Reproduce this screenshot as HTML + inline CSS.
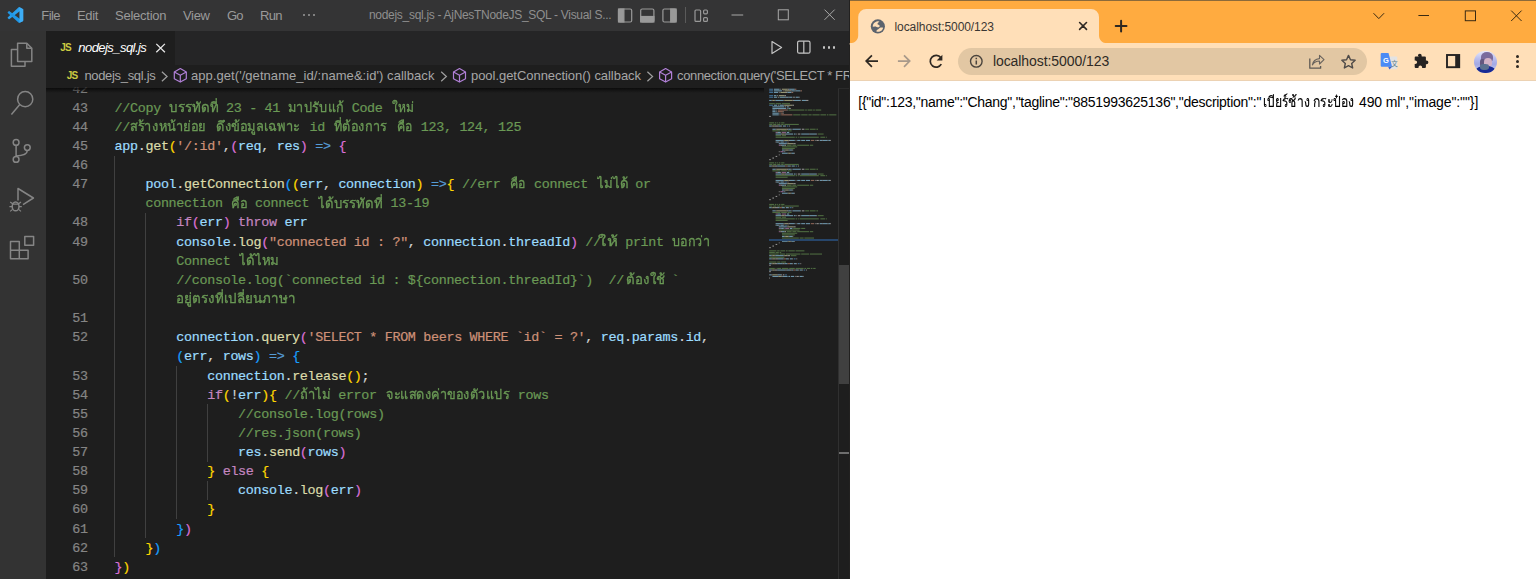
<!DOCTYPE html>
<html lang="th">
<head>
<meta charset="utf-8">
<title>nodejs_sql.js - Visual Studio Code / localhost:5000/123</title>
<style>
html,body{margin:0;padding:0;}
body{width:1536px;height:579px;overflow:hidden;position:relative;background:#1e1e1e;font-family:"Liberation Sans",sans-serif;}
.b{position:absolute;}
.t{position:absolute;white-space:pre;line-height:20px;height:20px;transform-origin:0 50%;}
svg{position:absolute;overflow:visible;}
.th{font-family:"Liberation Sans",sans-serif;-webkit-text-stroke:.3px currentColor;}
.th2{-webkit-text-stroke:.2px currentColor;}
.m{font-family:"Liberation Mono",monospace;-webkit-text-stroke:.2px currentColor;}

</style>
</head>
<body>
<div class="b" style="left:0.00px;top:0.00px;width:848.80px;height:31.00px;background:#343435;"></div>
<div class="b" style="left:0.00px;top:31.00px;width:46.00px;height:548.00px;background:#333333;"></div>
<div class="b" style="left:46.00px;top:30.80px;width:802.80px;height:34.20px;background:#252526;"></div>
<div class="b" style="left:46.00px;top:30.80px;width:128.50px;height:34.20px;background:#1e1e1e;"></div>
<div class="b" style="left:46.00px;top:65.00px;width:802.80px;height:514.00px;background:#1e1e1e;"></div>
<div class="b" style="left:303.0px;top:13.8px;width:1.8px;height:1.8px;border-radius:1px;background:#9a9a9a"></div>
<div class="b" style="left:308.2px;top:13.8px;width:1.8px;height:1.8px;border-radius:1px;background:#9a9a9a"></div>
<div class="b" style="left:313.4px;top:13.8px;width:1.8px;height:1.8px;border-radius:1px;background:#9a9a9a"></div>
<div class="b" style="left:114.10px;top:155.51px;width:1.00px;height:401.84px;background:#404040;"></div>
<div class="b" style="left:144.98px;top:212.91px;width:1.00px;height:325.30px;background:#404040;"></div>
<div class="b" style="left:175.86px;top:365.99px;width:1.00px;height:153.08px;background:#404040;"></div>
<div class="b" style="left:206.74px;top:404.26px;width:1.00px;height:57.40px;background:#404040;"></div>
<div class="b" style="left:206.74px;top:480.80px;width:1.00px;height:19.13px;background:#404040;"></div>
<div class="b" style="left:848.80px;top:0.00px;width:0.80px;height:579.00px;background:#222120;"></div>
<div class="b" style="left:849.60px;top:0.00px;width:686.40px;height:43.20px;background:#ffab40;"></div>
<div class="b" style="left:849.60px;top:0.00px;width:686.40px;height:0.90px;background:#8c6a3a;"></div>
<div class="b" style="left:849.60px;top:43.20px;width:686.40px;height:37.40px;background:#ffdfb8;"></div>
<div class="b" style="left:849.60px;top:79.80px;width:686.40px;height:0.80px;background:#ecd2b3;"></div>
<div class="b" style="left:849.60px;top:80.60px;width:686.40px;height:498.40px;background:#ffffff;"></div>
<svg style="left:0;top:0" width="1536" height="90"><path fill="#ffdfb8" d="M849.600 43.300 C855 43.300 858.200 40 858.200 35.300 V17 a8 8 0 0 1 8 -8 H1091 a8 8 0 0 1 8 8 V35.300 C1099 40 1102.200 43.300 1107.200 43.300 V44.500 H849.600 Z"/></svg>
<div class="b" style="left:958.2px;top:47.9px;width:408.8px;height:27.5px;border-radius:14px;background:#e2c7a3"></div>
<svg style="left:0;top:0" width="1536" height="579" fill="none"><g transform="translate(7.65,7.2) scale(0.157)"><path fill="#2a9fec" d="M96.5 10.8 75.9 .9a6.2 6.2 0 0 0-7.1 1.2L1.3 63.6a4.2 4.2 0 0 0 0 6.2l5.5 5a4.2 4.2 0 0 0 5.3.2L93.3 13.4c2.7-2.1 6.7-.1 6.7 3.3v-.2c0-2.400-1.400-4.600-3.500-5.700z" transform="scale(1,1)"/><path fill="#1f96e6" d="M96.5 89.200 75.900 99.100a6.200 6.200 0 0 1-7.100-1.200L1.300 36.400a4.200 4.200 0 0 1 0-6.200l5.500-5a4.200 4.200 0 0 1 5.300-.2L93.300 86.600c2.700 2.100 6.700.1 6.700-3.300v.2c0 2.400-1.400 4.600-3.500 5.700z"/><path fill="#3dadf5" d="M75.900 99.100a6.200 6.200 0 0 1-7.100-1.200c2.300 2.300 6.200.7 6.200-2.600V4.700c0-3.300-3.900-4.900-6.200-2.600a6.200 6.200 0 0 1 7.100-1.200l20.600 9.900c2.100 1 3.500 3.200 3.500 5.600v67.200c0 2.400-1.400 4.600-3.500 5.600z"/></g></svg>
<svg style="left:0;top:0" width="1536" height="579" fill="none"><g stroke="#858585" stroke-width="1.5" stroke-linejoin="round"><path d="M17.600 43.200h9.200l5 5v13.200h-14.200z"/><path d="M26.800 43.200v5h5"/><path d="M17.600 49.600h-6.200v16.600h13.600v-4.800"/></g></svg>
<svg style="left:0;top:0" width="1536" height="579" fill="none"><g stroke="#858585" stroke-width="1.5"><circle cx="25.200" cy="99.200" r="7.600"/><path d="M19.800 104.600 11.400 114.600"/></g></svg>
<svg style="left:0;top:0" width="1536" height="579" fill="none"><g stroke="#858585" stroke-width="1.5"><circle cx="16.100" cy="142.400" r="2.900"/><circle cx="16.100" cy="159.400" r="2.900"/><circle cx="27.300" cy="147.600" r="2.900"/><path d="M16.100 145.300v11.200M27.300 150.500c0 4.500-5.500 5.200-11.200 5.400"/></g></svg>
<svg style="left:0;top:0" width="1536" height="579" fill="none"><g stroke="#858585" stroke-width="1.500" stroke-linejoin="round"><path d="M18 200.500v-12l15.400 9.500-10.400 6.600"/><ellipse cx="15.600" cy="206.400" rx="3.400" ry="4.400"/><path d="M12.200 204.200h6.800M9.400 206.600h2.800M19 206.600h2.800M10.200 202l2.400 1.800M21 202l-2.400 1.800M10.200 211.400l2.400-2M21 211.400l-2.400-2" stroke-width="1.200"/></g></svg>
<svg style="left:0;top:0" width="1536" height="579" fill="none"><g stroke="#858585" stroke-width="1.500" stroke-linejoin="round"><path d="M10.500 241.600h8.800v17.200h-8.800zM10.500 250.200h17.600v8.600h-8.800M19.300 250.200h8.800v8.600"/><rect x="24.800" y="236.400" width="8.800" height="8.800"/></g></svg>
<svg style="left:0;top:0" width="1536" height="579" fill="none"><g stroke="#999999" stroke-width="1.200"><rect x="618.500" y="9" width="13.200" height="13" rx="1.500"/><rect x="618.500" y="9" width="5.400" height="13" fill="#999999"/><rect x="640.700" y="9" width="13.200" height="13" rx="1.500"/><rect x="640.700" y="16.500" width="13.200" height="5.500" fill="#999999"/><rect x="662.900" y="9" width="13.200" height="13" rx="1.500"/><rect x="670.700" y="9" width="5.400" height="13" fill="#999999"/><rect x="695" y="10" width="5.600" height="11.400" rx="1"/><rect x="703.600" y="10" width="3.800" height="3.800" rx="1"/><rect x="703.600" y="17.600" width="3.800" height="3.800" rx="1"/></g></svg>
<div class="b" style="left:684.70px;top:7.30px;width:1.00px;height:15.50px;background:#5a5a5a;"></div>
<svg style="left:0;top:0" width="1536" height="579" fill="none"><g stroke="#a8a8a8" stroke-width="1"><path d="M731.500 15h11.700"/><rect x="778.300" y="9.800" width="10" height="10"/><path d="M824.500 9.600l10.200 10.200M834.700 9.600l-10.200 10.200"/></g></svg>
<svg style="left:0;top:0" width="1536" height="579" fill="none"><g stroke="#e8e8e8" stroke-width="1.300"><path d="M156.300 43.900l8.600 8.400M164.900 43.900l-8.600 8.400"/></g></svg>
<svg style="left:0;top:0" width="1536" height="579" fill="none"><g stroke="#c5c5c5" stroke-width="1.200" stroke-linejoin="round"><path d="M772 41.600v12l9.600-6z"/><rect x="797.600" y="41.200" width="12.400" height="12" rx="1.500"/><path d="M803.800 41.200v12"/></g></svg>
<div class="b" style="left:823.2px;top:46.400px;width:2.200px;height:2.200px;border-radius:50%;background:#c5c5c5"></div>
<div class="b" style="left:828.1px;top:46.400px;width:2.200px;height:2.200px;border-radius:50%;background:#c5c5c5"></div>
<div class="b" style="left:833.0px;top:46.400px;width:2.200px;height:2.200px;border-radius:50%;background:#c5c5c5"></div>
<svg style="left:0;top:0" width="1536" height="579" fill="none"><path stroke="#a0a0a0" stroke-width="1.200" d="M161.9 71.700l5.200 4.800-5.200 4.800"/></svg>
<svg style="left:0;top:0" width="1536" height="579" fill="none"><g transform="translate(173.7,68.000)" stroke="#b180d7" stroke-width="1.200" stroke-linejoin="round"><path d="M6.600 .6l6 3.400v6.700L6.600 14.100 .6 10.700v-6.700z"/><path d="M.6 4L6.600 7.200l6-3.200M6.600 7.200v6.900"/></g></svg>
<svg style="left:0;top:0" width="1536" height="579" fill="none"><path stroke="#a0a0a0" stroke-width="1.200" d="M441.2 71.700l5.200 4.800-5.200 4.800"/></svg>
<svg style="left:0;top:0" width="1536" height="579" fill="none"><g transform="translate(452.9,68.000)" stroke="#b180d7" stroke-width="1.200" stroke-linejoin="round"><path d="M6.600 .6l6 3.400v6.700L6.600 14.100 .6 10.700v-6.700z"/><path d="M.6 4L6.600 7.200l6-3.200M6.600 7.200v6.900"/></g></svg>
<svg style="left:0;top:0" width="1536" height="579" fill="none"><path stroke="#a0a0a0" stroke-width="1.200" d="M647.4 71.700l5.200 4.800-5.200 4.800"/></svg>
<svg style="left:0;top:0" width="1536" height="579" fill="none"><g transform="translate(659.0,68.000)" stroke="#b180d7" stroke-width="1.200" stroke-linejoin="round"><path d="M6.600 .6l6 3.400v6.700L6.600 14.100 .6 10.700v-6.700z"/><path d="M.6 4L6.600 7.200l6-3.200M6.600 7.200v6.900"/></g></svg>
<svg style="left:0;top:0" width="1536" height="579" fill="none"><g stroke="#3a2a12" stroke-width="1"><path d="M1373.500 13.200l5.300 5.400 5.300-5.400"/><path d="M1418.400 15.500h10.600"/><rect x="1465.300" y="10.900" width="10.200" height="9.800"/><path d="M1511.200 10.600l10.400 10.400M1521.600 10.600l-10.400 10.400"/></g></svg>
<svg style="left:0;top:0" width="1536" height="579" fill="none"><g stroke="#2e2822" stroke-linecap="round"><path stroke-width="1.600" d="M1079.600 22.500l6.900 6.900M1086.500 22.500l-6.900 6.900"/><path stroke-width="2" d="M1115.700 26.100h10.800M1121.100 20.700v10.800"/></g></svg>
<svg style="left:0;top:0" width="1536" height="579" fill="none"><g><circle cx="877.850" cy="26.400" r="7.100" fill="#5c636d"/><path fill="#ffdfb8" transform="translate(877.850 26.400) scale(.94) translate(-877.600 -26.300)" d="M872.200 26.600C872.100 23.600 874.400 21.300 877.300 20.800L879.300 21.200C878.300 22.200 876.900 23 877.300 24C877.600 24.700 878.900 24.500 879.400 25.300C879.900 26.200 879.100 27.300 877.800 27.300C876.500 27.300 875.900 26.500 874.600 26.500Z"/><path fill="#ffdfb8" d="M876.600 31.700C876.200 30.700 876.900 30 877.900 29.600C879 29.100 879.100 28.200 880 27.800C881 27.400 882.200 27.500 883.100 27.800C883 29.300 881.900 30.700 880.400 31.300C879.200 31.800 877.800 31.900 876.600 31.700Z"/></g></svg>
<svg style="left:0;top:0" width="1536" height="579" fill="none"><g stroke-width="1.700" fill="none"><path stroke="#2e2822" d="M878 61.100h-11.600M871.900 55.400l-5.700 5.700 5.700 5.700"/><path stroke="#a8998a" d="M897.900 61.100h11.600M904 55.400l5.700 5.700-5.700 5.700"/><path stroke="#2e2822" d="M940.800 57.600A5.900 5.900 0 1 0 941.300 64.200"/><path fill="#2e2822" stroke="none" d="M942.400 54.700v5.700h-5.700z"/></g></svg>
<svg style="left:0;top:0" width="1536" height="579" fill="none"><g><circle cx="976.300" cy="61.300" r="5.800" stroke="#4a443d" stroke-width="1.400"/><path stroke="#4a443d" stroke-width="1.500" d="M976.300 60.400v4M976.300 57.700v1.600"/></g></svg>
<svg style="left:0;top:0" width="1536" height="579" fill="none"><g stroke="#5e5954" stroke-width="1.300" stroke-linejoin="round"><path d="M1309.800 58.400V68.200H1320.600V66"/><path stroke="#69635d" stroke-width="1.100" d="M1312.400 64.900c.6-3.600 3-5.900 7.100-6.300v-3.200l4.500 4.300-4.500 4.300v-3c-3.200 0-5.400 1.100-7.100 3.900z"/></g></svg>
<svg style="left:0;top:0" width="1536" height="579" fill="none"><path stroke="#4f4b48" stroke-width="1.400" stroke-linejoin="round" d="M1348.500 55.400l1.960 4.300 4.700.5-3.500 3.200 1 4.600-4.160-2.400-4.160 2.400 1-4.600-3.500-3.200 4.700-.5z"/></svg>
<svg style="left:0;top:0" width="1536" height="579" fill="none"><g><rect x="1389.600" y="56.500" width="7.600" height="12.800" rx=".8" fill="#e3e3e3"/><path d="M1380.700 54.100a1 1 0 0 1 1-1h6.800l3.600 13.600h-10.400a1 1 0 0 1-1-1z" fill="#4b8bf5"/><path d="M1388.200 66.700h3.900l-2.700 2.900z" fill="#3a5fcf"/></g></svg>
<svg style="left:0;top:0" width="1536" height="579" fill="none"><path transform="translate(-1.3,-.7)" fill="#262322" d="M1419.200 56.400a1.900 1.900 0 0 1 3.800 0v.9h3.200a1 1 0 0 1 1 1v2.800h.6a1.900 1.900 0 0 1 0 3.800h-.6v2.800a1 1 0 0 1-1 1h-2.800v-.7a1.800 1.800 0 0 0-3.600 0v.7h-2.800a1 1 0 0 1-1-1v-2.900h.6a1.800 1.800 0 0 0 0-3.600h-.6v-2.900a1 1 0 0 1 1-1h3.200z"/></svg>
<svg style="left:0;top:0" width="1536" height="579" fill="none"><g><rect x="1447" y="55" width="12.200" height="12.200" stroke="#262322" stroke-width="1.900"/><rect x="1455.200" y="55" width="4" height="12.200" fill="#262322"/></g></svg>
<div class="b" style="left:1474.100px;top:50.700px;width:22.500px;height:22.500px;border-radius:50%;overflow:hidden;background:linear-gradient(#e6e8fb 0,#b9bdee 35%,#a3a8e4 60%,#cdd4f4 100%)"><div class="b" style="left:6.500px;top:1.800px;width:12.500px;height:10px;border-radius:50% 50% 35% 35%;background:#7a6b9d;filter:blur(.4px)"></div><div class="b" style="left:6px;top:8px;width:4.500px;height:8px;border-radius:40%;background:#65587f"></div><div class="b" style="left:9.500px;top:7.800px;width:8.500px;height:8.500px;border-radius:45%;background:#d3b2c6;filter:blur(.4px)"></div><div class="b" style="left:1.500px;top:15.300px;width:19px;height:9px;border-radius:45% 45% 0 0;background:#182a94"></div><div class="b" style="left:6px;top:13.500px;width:9px;height:6px;border-radius:40%;background:#5c708f;filter:blur(.5px)"></div></div>
<div class="b" style="left:1515.900px;top:55.1px;width:3px;height:3px;border-radius:50%;background:#2e2822"></div>
<div class="b" style="left:1515.900px;top:60.1px;width:3px;height:3px;border-radius:50%;background:#2e2822"></div>
<div class="b" style="left:1515.900px;top:65.1px;width:3px;height:3px;border-radius:50%;background:#2e2822"></div>
<svg style="left:0;top:0" width="1536" height="579" fill="none"><g opacity=".62"><rect x="769.2" y="88.7" width="4.0" height="1.100" fill="#569cd6"/><rect x="774.0" y="88.7" width="5.6" height="1.100" fill="#9cdcfe"/><rect x="780.4" y="88.7" width="0.8" height="1.100" fill="#d4d4d4"/><rect x="782.0" y="88.7" width="5.6" height="1.100" fill="#dcdcaa"/><rect x="787.6" y="88.7" width="1.6" height="1.100" fill="#d4d4d4"/><rect x="789.2" y="88.7" width="5.6" height="1.100" fill="#9cdcfe"/><rect x="794.8" y="88.7" width="1.6" height="1.100" fill="#ce9178"/><rect x="769.2" y="90.3" width="4.0" height="1.100" fill="#569cd6"/><rect x="774.0" y="90.3" width="8.0" height="1.100" fill="#9cdcfe"/><rect x="782.8" y="90.3" width="0.8" height="1.100" fill="#d4d4d4"/><rect x="784.4" y="90.3" width="5.6" height="1.100" fill="#dcdcaa"/><rect x="790.0" y="90.3" width="1.6" height="1.100" fill="#d4d4d4"/><rect x="791.6" y="90.3" width="3.2" height="1.100" fill="#9cdcfe"/><rect x="794.8" y="90.3" width="0.8" height="1.100" fill="#d4d4d4"/><rect x="795.6" y="90.3" width="4.8" height="1.100" fill="#9cdcfe"/><rect x="800.4" y="90.3" width="1.6" height="1.100" fill="#ce9178"/><rect x="769.2" y="91.9" width="4.0" height="1.100" fill="#569cd6"/><rect x="774.0" y="91.9" width="4.0" height="1.100" fill="#9cdcfe"/><rect x="778.8" y="91.9" width="0.8" height="1.100" fill="#d4d4d4"/><rect x="780.4" y="91.9" width="5.6" height="1.100" fill="#dcdcaa"/><rect x="786.0" y="91.9" width="1.6" height="1.100" fill="#d4d4d4"/><rect x="787.6" y="91.9" width="4.0" height="1.100" fill="#9cdcfe"/><rect x="791.6" y="91.9" width="1.6" height="1.100" fill="#ce9178"/><rect x="769.2" y="95.1" width="4.0" height="1.100" fill="#569cd6"/><rect x="774.0" y="95.1" width="2.4" height="1.100" fill="#9cdcfe"/><rect x="777.2" y="95.1" width="0.8" height="1.100" fill="#d4d4d4"/><rect x="778.8" y="95.1" width="5.6" height="1.100" fill="#dcdcaa"/><rect x="784.4" y="95.1" width="1.6" height="1.100" fill="#d4d4d4"/><rect x="769.2" y="96.7" width="4.0" height="1.100" fill="#569cd6"/><rect x="774.0" y="96.7" width="3.2" height="1.100" fill="#9cdcfe"/><rect x="778.0" y="96.7" width="0.8" height="1.100" fill="#d4d4d4"/><rect x="779.6" y="96.7" width="5.6" height="1.100" fill="#9cdcfe"/><rect x="785.2" y="96.7" width="0.8" height="1.100" fill="#d4d4d4"/><rect x="786.0" y="96.7" width="2.4" height="1.100" fill="#9cdcfe"/><rect x="788.4" y="96.7" width="0.8" height="1.100" fill="#d4d4d4"/><rect x="789.2" y="96.7" width="3.2" height="1.100" fill="#9cdcfe"/><rect x="793.2" y="96.7" width="1.6" height="1.100" fill="#d4d4d4"/><rect x="795.6" y="96.7" width="3.2" height="1.100" fill="#9cdcfe"/><rect x="798.8" y="96.7" width="0.8" height="1.100" fill="#d4d4d4"/><rect x="769.2" y="99.9" width="2.4" height="1.100" fill="#9cdcfe"/><rect x="771.6" y="99.9" width="0.8" height="1.100" fill="#d4d4d4"/><rect x="772.4" y="99.9" width="2.4" height="1.100" fill="#dcdcaa"/><rect x="774.8" y="99.9" width="0.8" height="1.100" fill="#d4d4d4"/><rect x="775.6" y="99.9" width="8.0" height="1.100" fill="#9cdcfe"/><rect x="783.6" y="99.9" width="0.8" height="1.100" fill="#d4d4d4"/><rect x="784.4" y="99.9" width="8.0" height="1.100" fill="#dcdcaa"/><rect x="792.4" y="99.9" width="1.6" height="1.100" fill="#d4d4d4"/><rect x="794.0" y="99.9" width="6.4" height="1.100" fill="#9cdcfe"/><rect x="800.4" y="99.9" width="0.8" height="1.100" fill="#d4d4d4"/><rect x="802.0" y="99.9" width="4.0" height="1.100" fill="#9cdcfe"/><rect x="806.0" y="99.9" width="2.4" height="1.100" fill="#d4d4d4"/><rect x="769.2" y="103.1" width="5.6" height="1.100" fill="#6a9955"/><rect x="775.6" y="103.1" width="5.6" height="1.100" fill="#6a9955"/><rect x="782.0" y="103.1" width="8.0" height="1.100" fill="#6a9955"/><rect x="769.2" y="104.7" width="4.0" height="1.100" fill="#569cd6"/><rect x="774.0" y="104.7" width="3.2" height="1.100" fill="#9cdcfe"/><rect x="778.0" y="104.7" width="0.8" height="1.100" fill="#d4d4d4"/><rect x="779.6" y="104.7" width="4.0" height="1.100" fill="#9cdcfe"/><rect x="783.6" y="104.7" width="0.8" height="1.100" fill="#d4d4d4"/><rect x="784.4" y="104.7" width="8.0" height="1.100" fill="#dcdcaa"/><rect x="792.4" y="104.7" width="1.6" height="1.100" fill="#d4d4d4"/><rect x="772.4" y="106.3" width="12.0" height="1.100" fill="#9cdcfe"/><rect x="785.2" y="106.3" width="0.8" height="1.100" fill="#d4d4d4"/><rect x="786.8" y="106.3" width="1.6" height="1.100" fill="#9cdcfe"/><rect x="788.4" y="106.3" width="0.8" height="1.100" fill="#d4d4d4"/><rect x="772.4" y="107.9" width="13.6" height="1.100" fill="#9cdcfe"/><rect x="786.8" y="107.9" width="0.8" height="1.100" fill="#d4d4d4"/><rect x="788.4" y="107.9" width="1.6" height="1.100" fill="#9cdcfe"/><rect x="790.0" y="107.9" width="0.8" height="1.100" fill="#d4d4d4"/><rect x="772.4" y="109.5" width="3.2" height="1.100" fill="#9cdcfe"/><rect x="776.4" y="109.5" width="0.8" height="1.100" fill="#d4d4d4"/><rect x="778.0" y="109.5" width="8.8" height="1.100" fill="#ce9178"/><rect x="786.8" y="109.5" width="0.8" height="1.100" fill="#d4d4d4"/><rect x="788.4" y="109.5" width="16.0" height="1.100" fill="#6a9955"/><rect x="805.2" y="109.5" width="1.6" height="1.100" fill="#6a9955"/><rect x="807.6" y="109.5" width="4.8" height="1.100" fill="#6a9955"/><rect x="813.2" y="109.5" width="1.6" height="1.100" fill="#6a9955"/><rect x="815.6" y="109.5" width="5.6" height="1.100" fill="#6a9955"/><rect x="772.4" y="111.1" width="3.2" height="1.100" fill="#9cdcfe"/><rect x="776.4" y="111.1" width="0.8" height="1.100" fill="#d4d4d4"/><rect x="778.0" y="111.1" width="4.8" height="1.100" fill="#ce9178"/><rect x="782.8" y="111.1" width="0.8" height="1.100" fill="#d4d4d4"/><rect x="772.4" y="112.7" width="6.4" height="1.100" fill="#9cdcfe"/><rect x="779.6" y="112.7" width="0.8" height="1.100" fill="#d4d4d4"/><rect x="781.2" y="112.7" width="1.6" height="1.100" fill="#ce9178"/><rect x="782.8" y="112.7" width="0.8" height="1.100" fill="#d4d4d4"/><rect x="772.4" y="114.3" width="6.4" height="1.100" fill="#9cdcfe"/><rect x="779.6" y="114.3" width="0.8" height="1.100" fill="#d4d4d4"/><rect x="781.2" y="114.3" width="11.2" height="1.100" fill="#ce9178"/><rect x="793.2" y="114.3" width="7.2" height="1.100" fill="#6a9955"/><rect x="801.2" y="114.3" width="6.4" height="1.100" fill="#6a9955"/><rect x="808.4" y="114.3" width="3.2" height="1.100" fill="#6a9955"/><rect x="812.4" y="114.3" width="7.2" height="1.100" fill="#6a9955"/><rect x="820.4" y="114.3" width="5.6" height="1.100" fill="#6a9955"/><rect x="826.8" y="114.3" width="1.6" height="1.100" fill="#6a9955"/><rect x="829.2" y="114.3" width="7.2" height="1.100" fill="#6a9955"/><rect x="769.2" y="115.9" width="1.6" height="1.100" fill="#d4d4d4"/><rect x="769.2" y="122.3" width="4.8" height="1.100" fill="#6a9955"/><rect x="774.8" y="122.3" width="1.6" height="1.100" fill="#6a9955"/><rect x="777.2" y="122.3" width="0.8" height="1.100" fill="#6a9955"/><rect x="778.8" y="122.3" width="1.6" height="1.100" fill="#6a9955"/><rect x="781.2" y="122.3" width="3.2" height="1.100" fill="#6a9955"/><rect x="769.2" y="123.9" width="3.2" height="1.100" fill="#6a9955"/><rect x="773.2" y="123.9" width="3.2" height="1.100" fill="#6a9955"/><rect x="777.2" y="123.9" width="3.2" height="1.100" fill="#6a9955"/><rect x="781.2" y="123.9" width="2.4" height="1.100" fill="#6a9955"/><rect x="784.4" y="123.9" width="14.4" height="1.100" fill="#6a9955"/><rect x="769.2" y="125.5" width="2.4" height="1.100" fill="#9cdcfe"/><rect x="771.6" y="125.5" width="0.8" height="1.100" fill="#d4d4d4"/><rect x="772.4" y="125.5" width="2.4" height="1.100" fill="#dcdcaa"/><rect x="774.8" y="125.5" width="4.0" height="1.100" fill="#d4d4d4"/><rect x="778.8" y="125.5" width="2.4" height="1.100" fill="#9cdcfe"/><rect x="781.2" y="125.5" width="0.8" height="1.100" fill="#d4d4d4"/><rect x="782.8" y="125.5" width="2.4" height="1.100" fill="#9cdcfe"/><rect x="785.2" y="125.5" width="0.8" height="1.100" fill="#d4d4d4"/><rect x="786.8" y="125.5" width="1.6" height="1.100" fill="#569cd6"/><rect x="789.2" y="125.5" width="0.8" height="1.100" fill="#d4d4d4"/><rect x="772.4" y="128.7" width="3.2" height="1.100" fill="#9cdcfe"/><rect x="775.6" y="128.7" width="0.8" height="1.100" fill="#d4d4d4"/><rect x="776.4" y="128.7" width="10.4" height="1.100" fill="#dcdcaa"/><rect x="786.8" y="128.7" width="1.6" height="1.100" fill="#d4d4d4"/><rect x="788.4" y="128.7" width="2.4" height="1.100" fill="#9cdcfe"/><rect x="790.8" y="128.7" width="0.8" height="1.100" fill="#d4d4d4"/><rect x="792.4" y="128.7" width="8.0" height="1.100" fill="#9cdcfe"/><rect x="800.4" y="128.7" width="0.8" height="1.100" fill="#d4d4d4"/><rect x="802.0" y="128.7" width="2.4" height="1.100" fill="#d4d4d4"/><rect x="805.2" y="128.7" width="4.0" height="1.100" fill="#6a9955"/><rect x="810.0" y="128.7" width="5.6" height="1.100" fill="#6a9955"/><rect x="816.4" y="128.7" width="1.6" height="1.100" fill="#6a9955"/><rect x="772.4" y="130.3" width="8.0" height="1.100" fill="#6a9955"/><rect x="781.2" y="130.3" width="5.6" height="1.100" fill="#6a9955"/><rect x="787.6" y="130.3" width="1.6" height="1.100" fill="#6a9955"/><rect x="789.2" y="130.3" width="0.8" height="1.100" fill="#6a9955"/><rect x="790.0" y="130.3" width="1.6" height="1.100" fill="#6a9955"/><rect x="775.6" y="131.9" width="1.6" height="1.100" fill="#c586c0"/><rect x="777.2" y="131.9" width="0.8" height="1.100" fill="#d4d4d4"/><rect x="778.0" y="131.9" width="2.4" height="1.100" fill="#9cdcfe"/><rect x="780.4" y="131.9" width="0.8" height="1.100" fill="#d4d4d4"/><rect x="782.0" y="131.9" width="4.0" height="1.100" fill="#c586c0"/><rect x="786.8" y="131.9" width="2.4" height="1.100" fill="#9cdcfe"/><rect x="775.6" y="133.5" width="5.6" height="1.100" fill="#9cdcfe"/><rect x="781.2" y="133.5" width="0.8" height="1.100" fill="#d4d4d4"/><rect x="782.0" y="133.5" width="2.4" height="1.100" fill="#dcdcaa"/><rect x="784.4" y="133.5" width="1.6" height="1.100" fill="#d4d4d4"/><rect x="786.0" y="133.5" width="7.2" height="1.100" fill="#9cdcfe"/><rect x="794.0" y="133.5" width="1.6" height="1.100" fill="#9cdcfe"/><rect x="796.4" y="133.5" width="0.8" height="1.100" fill="#d4d4d4"/><rect x="798.0" y="133.5" width="2.4" height="1.100" fill="#d4d4d4"/><rect x="801.2" y="133.5" width="8.0" height="1.100" fill="#9cdcfe"/><rect x="809.2" y="133.5" width="0.8" height="1.100" fill="#d4d4d4"/><rect x="810.0" y="133.5" width="6.4" height="1.100" fill="#9cdcfe"/><rect x="816.4" y="133.5" width="0.8" height="1.100" fill="#d4d4d4"/><rect x="818.0" y="133.5" width="5.6" height="1.100" fill="#6a9955"/><rect x="775.6" y="135.1" width="5.6" height="1.100" fill="#6a9955"/><rect x="782.0" y="135.1" width="4.0" height="1.100" fill="#6a9955"/><rect x="775.6" y="136.7" width="19.2" height="1.100" fill="#6a9955"/><rect x="795.6" y="136.7" width="1.6" height="1.100" fill="#6a9955"/><rect x="798.0" y="136.7" width="0.8" height="1.100" fill="#6a9955"/><rect x="799.6" y="136.7" width="19.2" height="1.100" fill="#6a9955"/><rect x="820.4" y="136.7" width="4.8" height="1.100" fill="#6a9955"/><rect x="826.0" y="136.7" width="0.8" height="1.100" fill="#6a9955"/><rect x="775.6" y="139.9" width="8.0" height="1.100" fill="#9cdcfe"/><rect x="783.6" y="139.9" width="0.8" height="1.100" fill="#d4d4d4"/><rect x="784.4" y="139.9" width="4.0" height="1.100" fill="#dcdcaa"/><rect x="788.4" y="139.9" width="1.6" height="1.100" fill="#d4d4d4"/><rect x="790.0" y="139.9" width="4.8" height="1.100" fill="#9cdcfe"/><rect x="795.6" y="139.9" width="0.8" height="1.100" fill="#d4d4d4"/><rect x="797.2" y="139.9" width="3.2" height="1.100" fill="#9cdcfe"/><rect x="801.2" y="139.9" width="4.0" height="1.100" fill="#9cdcfe"/><rect x="806.0" y="139.9" width="4.0" height="1.100" fill="#9cdcfe"/><rect x="810.8" y="139.9" width="3.2" height="1.100" fill="#ce9178"/><rect x="814.8" y="139.9" width="0.8" height="1.100" fill="#d4d4d4"/><rect x="816.4" y="139.9" width="2.4" height="1.100" fill="#d4d4d4"/><rect x="819.6" y="139.9" width="2.4" height="1.100" fill="#9cdcfe"/><rect x="822.0" y="139.9" width="0.8" height="1.100" fill="#d4d4d4"/><rect x="822.8" y="139.9" width="4.8" height="1.100" fill="#9cdcfe"/><rect x="827.6" y="139.9" width="0.8" height="1.100" fill="#d4d4d4"/><rect x="828.4" y="139.9" width="1.6" height="1.100" fill="#9cdcfe"/><rect x="830.0" y="139.9" width="0.8" height="1.100" fill="#d4d4d4"/><rect x="775.6" y="141.5" width="0.8" height="1.100" fill="#d4d4d4"/><rect x="776.4" y="141.5" width="2.4" height="1.100" fill="#9cdcfe"/><rect x="778.8" y="141.5" width="0.8" height="1.100" fill="#d4d4d4"/><rect x="780.4" y="141.5" width="3.2" height="1.100" fill="#9cdcfe"/><rect x="783.6" y="141.5" width="0.8" height="1.100" fill="#d4d4d4"/><rect x="785.2" y="141.5" width="1.6" height="1.100" fill="#569cd6"/><rect x="787.6" y="141.5" width="0.8" height="1.100" fill="#d4d4d4"/><rect x="778.8" y="143.1" width="8.0" height="1.100" fill="#9cdcfe"/><rect x="786.8" y="143.1" width="0.8" height="1.100" fill="#d4d4d4"/><rect x="787.6" y="143.1" width="5.6" height="1.100" fill="#dcdcaa"/><rect x="793.2" y="143.1" width="2.4" height="1.100" fill="#d4d4d4"/><rect x="778.8" y="144.7" width="1.6" height="1.100" fill="#c586c0"/><rect x="780.4" y="144.7" width="1.6" height="1.100" fill="#d4d4d4"/><rect x="782.0" y="144.7" width="2.4" height="1.100" fill="#9cdcfe"/><rect x="784.4" y="144.7" width="1.6" height="1.100" fill="#d4d4d4"/><rect x="786.8" y="144.7" width="4.8" height="1.100" fill="#6a9955"/><rect x="792.4" y="144.7" width="4.0" height="1.100" fill="#6a9955"/><rect x="797.2" y="144.7" width="12.0" height="1.100" fill="#6a9955"/><rect x="810.0" y="144.7" width="3.2" height="1.100" fill="#6a9955"/><rect x="782.0" y="146.3" width="15.2" height="1.100" fill="#6a9955"/><rect x="782.0" y="147.9" width="12.8" height="1.100" fill="#6a9955"/><rect x="782.0" y="149.5" width="2.4" height="1.100" fill="#9cdcfe"/><rect x="784.4" y="149.5" width="0.8" height="1.100" fill="#d4d4d4"/><rect x="785.2" y="149.5" width="3.2" height="1.100" fill="#dcdcaa"/><rect x="788.4" y="149.5" width="0.8" height="1.100" fill="#d4d4d4"/><rect x="789.2" y="149.5" width="3.2" height="1.100" fill="#9cdcfe"/><rect x="792.4" y="149.5" width="0.8" height="1.100" fill="#d4d4d4"/><rect x="778.8" y="151.1" width="0.8" height="1.100" fill="#d4d4d4"/><rect x="780.4" y="151.1" width="3.2" height="1.100" fill="#c586c0"/><rect x="784.4" y="151.1" width="0.8" height="1.100" fill="#d4d4d4"/><rect x="782.0" y="152.7" width="5.6" height="1.100" fill="#9cdcfe"/><rect x="787.6" y="152.7" width="0.8" height="1.100" fill="#d4d4d4"/><rect x="788.4" y="152.7" width="2.4" height="1.100" fill="#dcdcaa"/><rect x="790.8" y="152.7" width="0.8" height="1.100" fill="#d4d4d4"/><rect x="791.6" y="152.7" width="2.4" height="1.100" fill="#9cdcfe"/><rect x="794.0" y="152.7" width="0.8" height="1.100" fill="#d4d4d4"/><rect x="778.8" y="154.3" width="0.8" height="1.100" fill="#d4d4d4"/><rect x="775.6" y="155.9" width="1.6" height="1.100" fill="#d4d4d4"/><rect x="772.4" y="157.5" width="1.6" height="1.100" fill="#d4d4d4"/><rect x="769.2" y="159.1" width="1.6" height="1.100" fill="#d4d4d4"/><rect x="769.2" y="162.3" width="4.8" height="1.100" fill="#6a9955"/><rect x="774.8" y="162.3" width="1.6" height="1.100" fill="#6a9955"/><rect x="777.2" y="162.3" width="0.8" height="1.100" fill="#6a9955"/><rect x="778.8" y="162.3" width="1.6" height="1.100" fill="#6a9955"/><rect x="781.2" y="162.3" width="3.2" height="1.100" fill="#6a9955"/><rect x="769.2" y="163.9" width="3.2" height="1.100" fill="#6a9955"/><rect x="773.2" y="163.9" width="3.2" height="1.100" fill="#6a9955"/><rect x="777.2" y="163.9" width="3.2" height="1.100" fill="#6a9955"/><rect x="781.2" y="163.9" width="2.4" height="1.100" fill="#6a9955"/><rect x="784.4" y="163.9" width="14.4" height="1.100" fill="#6a9955"/><rect x="769.2" y="165.5" width="2.4" height="1.100" fill="#9cdcfe"/><rect x="771.6" y="165.5" width="0.8" height="1.100" fill="#d4d4d4"/><rect x="772.4" y="165.5" width="2.4" height="1.100" fill="#dcdcaa"/><rect x="774.8" y="165.5" width="2.4" height="1.100" fill="#d4d4d4"/><rect x="777.2" y="165.5" width="8.0" height="1.100" fill="#9cdcfe"/><rect x="785.2" y="165.5" width="2.4" height="1.100" fill="#ce9178"/><rect x="787.6" y="165.5" width="2.4" height="1.100" fill="#9cdcfe"/><rect x="790.0" y="165.5" width="0.8" height="1.100" fill="#d4d4d4"/><rect x="791.6" y="165.5" width="2.4" height="1.100" fill="#9cdcfe"/><rect x="794.0" y="165.5" width="0.8" height="1.100" fill="#d4d4d4"/><rect x="795.6" y="165.5" width="1.6" height="1.100" fill="#569cd6"/><rect x="798.0" y="165.5" width="0.8" height="1.100" fill="#d4d4d4"/><rect x="772.4" y="168.7" width="3.2" height="1.100" fill="#9cdcfe"/><rect x="775.6" y="168.7" width="0.8" height="1.100" fill="#d4d4d4"/><rect x="776.4" y="168.7" width="10.4" height="1.100" fill="#dcdcaa"/><rect x="786.8" y="168.7" width="1.6" height="1.100" fill="#d4d4d4"/><rect x="788.4" y="168.7" width="2.4" height="1.100" fill="#9cdcfe"/><rect x="790.8" y="168.7" width="0.8" height="1.100" fill="#d4d4d4"/><rect x="792.4" y="168.7" width="8.0" height="1.100" fill="#9cdcfe"/><rect x="800.4" y="168.7" width="0.8" height="1.100" fill="#d4d4d4"/><rect x="802.0" y="168.7" width="2.4" height="1.100" fill="#d4d4d4"/><rect x="805.2" y="168.7" width="4.0" height="1.100" fill="#6a9955"/><rect x="810.0" y="168.7" width="5.6" height="1.100" fill="#6a9955"/><rect x="816.4" y="168.7" width="1.6" height="1.100" fill="#6a9955"/><rect x="772.4" y="170.3" width="8.0" height="1.100" fill="#6a9955"/><rect x="781.2" y="170.3" width="5.6" height="1.100" fill="#6a9955"/><rect x="787.6" y="170.3" width="1.6" height="1.100" fill="#6a9955"/><rect x="789.2" y="170.3" width="0.8" height="1.100" fill="#6a9955"/><rect x="790.0" y="170.3" width="1.6" height="1.100" fill="#6a9955"/><rect x="775.6" y="171.9" width="1.6" height="1.100" fill="#c586c0"/><rect x="777.2" y="171.9" width="0.8" height="1.100" fill="#d4d4d4"/><rect x="778.0" y="171.9" width="2.4" height="1.100" fill="#9cdcfe"/><rect x="780.4" y="171.9" width="0.8" height="1.100" fill="#d4d4d4"/><rect x="782.0" y="171.9" width="4.0" height="1.100" fill="#c586c0"/><rect x="786.8" y="171.9" width="2.4" height="1.100" fill="#9cdcfe"/><rect x="775.6" y="173.5" width="5.6" height="1.100" fill="#9cdcfe"/><rect x="781.2" y="173.5" width="0.8" height="1.100" fill="#d4d4d4"/><rect x="782.0" y="173.5" width="2.4" height="1.100" fill="#dcdcaa"/><rect x="784.4" y="173.5" width="1.6" height="1.100" fill="#d4d4d4"/><rect x="786.0" y="173.5" width="7.2" height="1.100" fill="#9cdcfe"/><rect x="794.0" y="173.5" width="1.6" height="1.100" fill="#9cdcfe"/><rect x="796.4" y="173.5" width="0.8" height="1.100" fill="#d4d4d4"/><rect x="798.0" y="173.5" width="2.4" height="1.100" fill="#d4d4d4"/><rect x="801.2" y="173.5" width="8.0" height="1.100" fill="#9cdcfe"/><rect x="809.2" y="173.5" width="0.8" height="1.100" fill="#d4d4d4"/><rect x="810.0" y="173.5" width="6.4" height="1.100" fill="#9cdcfe"/><rect x="816.4" y="173.5" width="0.8" height="1.100" fill="#d4d4d4"/><rect x="818.0" y="173.5" width="5.6" height="1.100" fill="#6a9955"/><rect x="775.6" y="175.1" width="19.2" height="1.100" fill="#6a9955"/><rect x="795.6" y="175.1" width="1.6" height="1.100" fill="#6a9955"/><rect x="798.0" y="175.1" width="0.8" height="1.100" fill="#6a9955"/><rect x="799.6" y="175.1" width="19.2" height="1.100" fill="#6a9955"/><rect x="820.4" y="175.1" width="4.8" height="1.100" fill="#6a9955"/><rect x="826.0" y="175.1" width="0.8" height="1.100" fill="#6a9955"/><rect x="775.6" y="176.7" width="12.0" height="1.100" fill="#6a9955"/><rect x="775.6" y="179.9" width="8.0" height="1.100" fill="#9cdcfe"/><rect x="783.6" y="179.9" width="0.8" height="1.100" fill="#d4d4d4"/><rect x="784.4" y="179.9" width="4.0" height="1.100" fill="#dcdcaa"/><rect x="788.4" y="179.9" width="1.6" height="1.100" fill="#d4d4d4"/><rect x="790.0" y="179.9" width="4.8" height="1.100" fill="#9cdcfe"/><rect x="795.6" y="179.9" width="0.8" height="1.100" fill="#d4d4d4"/><rect x="797.2" y="179.9" width="3.2" height="1.100" fill="#9cdcfe"/><rect x="801.2" y="179.9" width="4.0" height="1.100" fill="#9cdcfe"/><rect x="806.0" y="179.9" width="4.0" height="1.100" fill="#9cdcfe"/><rect x="810.8" y="179.9" width="3.2" height="1.100" fill="#ce9178"/><rect x="814.8" y="179.9" width="0.8" height="1.100" fill="#d4d4d4"/><rect x="816.4" y="179.9" width="2.4" height="1.100" fill="#d4d4d4"/><rect x="819.6" y="179.9" width="2.4" height="1.100" fill="#9cdcfe"/><rect x="822.0" y="179.9" width="0.8" height="1.100" fill="#d4d4d4"/><rect x="822.8" y="179.9" width="4.8" height="1.100" fill="#9cdcfe"/><rect x="827.6" y="179.9" width="0.8" height="1.100" fill="#d4d4d4"/><rect x="828.4" y="179.9" width="1.6" height="1.100" fill="#9cdcfe"/><rect x="830.0" y="179.9" width="0.8" height="1.100" fill="#d4d4d4"/><rect x="775.6" y="181.5" width="0.8" height="1.100" fill="#d4d4d4"/><rect x="776.4" y="181.5" width="2.4" height="1.100" fill="#9cdcfe"/><rect x="778.8" y="181.5" width="0.8" height="1.100" fill="#d4d4d4"/><rect x="780.4" y="181.5" width="3.2" height="1.100" fill="#9cdcfe"/><rect x="783.6" y="181.5" width="0.8" height="1.100" fill="#d4d4d4"/><rect x="785.2" y="181.5" width="1.6" height="1.100" fill="#569cd6"/><rect x="787.6" y="181.5" width="0.8" height="1.100" fill="#d4d4d4"/><rect x="778.8" y="183.1" width="8.0" height="1.100" fill="#9cdcfe"/><rect x="786.8" y="183.1" width="0.8" height="1.100" fill="#d4d4d4"/><rect x="787.6" y="183.1" width="5.6" height="1.100" fill="#dcdcaa"/><rect x="793.2" y="183.1" width="2.4" height="1.100" fill="#d4d4d4"/><rect x="778.8" y="184.7" width="1.6" height="1.100" fill="#c586c0"/><rect x="780.4" y="184.7" width="1.6" height="1.100" fill="#d4d4d4"/><rect x="782.0" y="184.7" width="2.4" height="1.100" fill="#9cdcfe"/><rect x="784.4" y="184.7" width="1.6" height="1.100" fill="#d4d4d4"/><rect x="786.8" y="184.7" width="4.8" height="1.100" fill="#6a9955"/><rect x="792.4" y="184.7" width="4.0" height="1.100" fill="#6a9955"/><rect x="797.2" y="184.7" width="12.0" height="1.100" fill="#6a9955"/><rect x="810.0" y="184.7" width="3.2" height="1.100" fill="#6a9955"/><rect x="782.0" y="186.3" width="15.2" height="1.100" fill="#6a9955"/><rect x="782.0" y="187.9" width="12.8" height="1.100" fill="#6a9955"/><rect x="782.0" y="189.5" width="2.4" height="1.100" fill="#9cdcfe"/><rect x="784.4" y="189.5" width="0.8" height="1.100" fill="#d4d4d4"/><rect x="785.2" y="189.5" width="3.2" height="1.100" fill="#dcdcaa"/><rect x="788.4" y="189.5" width="0.8" height="1.100" fill="#d4d4d4"/><rect x="789.2" y="189.5" width="3.2" height="1.100" fill="#9cdcfe"/><rect x="792.4" y="189.5" width="0.8" height="1.100" fill="#d4d4d4"/><rect x="778.8" y="191.1" width="0.8" height="1.100" fill="#d4d4d4"/><rect x="780.4" y="191.1" width="3.2" height="1.100" fill="#c586c0"/><rect x="784.4" y="191.1" width="0.8" height="1.100" fill="#d4d4d4"/><rect x="782.0" y="192.7" width="5.6" height="1.100" fill="#9cdcfe"/><rect x="787.6" y="192.7" width="0.8" height="1.100" fill="#d4d4d4"/><rect x="788.4" y="192.7" width="2.4" height="1.100" fill="#dcdcaa"/><rect x="790.8" y="192.7" width="0.8" height="1.100" fill="#d4d4d4"/><rect x="791.6" y="192.7" width="2.4" height="1.100" fill="#9cdcfe"/><rect x="794.0" y="192.7" width="0.8" height="1.100" fill="#d4d4d4"/><rect x="778.8" y="194.3" width="0.8" height="1.100" fill="#d4d4d4"/><rect x="775.6" y="195.9" width="1.6" height="1.100" fill="#d4d4d4"/><rect x="772.4" y="197.5" width="1.6" height="1.100" fill="#d4d4d4"/><rect x="769.2" y="199.1" width="1.6" height="1.100" fill="#d4d4d4"/><rect x="769.2" y="203.9" width="4.8" height="1.100" fill="#6a9955"/><rect x="774.8" y="203.9" width="1.6" height="1.100" fill="#6a9955"/><rect x="777.2" y="203.9" width="0.8" height="1.100" fill="#6a9955"/><rect x="778.8" y="203.9" width="1.6" height="1.100" fill="#6a9955"/><rect x="781.2" y="203.9" width="3.2" height="1.100" fill="#6a9955"/><rect x="769.2" y="205.5" width="3.2" height="1.100" fill="#6a9955"/><rect x="773.2" y="205.5" width="3.2" height="1.100" fill="#6a9955"/><rect x="777.2" y="205.5" width="3.2" height="1.100" fill="#6a9955"/><rect x="781.2" y="205.5" width="2.4" height="1.100" fill="#6a9955"/><rect x="784.4" y="205.5" width="14.4" height="1.100" fill="#6a9955"/><rect x="769.2" y="207.1" width="2.4" height="1.100" fill="#9cdcfe"/><rect x="771.6" y="207.1" width="0.8" height="1.100" fill="#d4d4d4"/><rect x="772.4" y="207.1" width="2.4" height="1.100" fill="#dcdcaa"/><rect x="774.8" y="207.1" width="3.2" height="1.100" fill="#d4d4d4"/><rect x="778.0" y="207.1" width="1.6" height="1.100" fill="#9cdcfe"/><rect x="779.6" y="207.1" width="2.4" height="1.100" fill="#ce9178"/><rect x="782.0" y="207.1" width="2.4" height="1.100" fill="#9cdcfe"/><rect x="784.4" y="207.1" width="0.8" height="1.100" fill="#d4d4d4"/><rect x="786.0" y="207.1" width="2.4" height="1.100" fill="#9cdcfe"/><rect x="788.4" y="207.1" width="0.8" height="1.100" fill="#d4d4d4"/><rect x="790.0" y="207.1" width="1.6" height="1.100" fill="#569cd6"/><rect x="792.4" y="207.1" width="0.8" height="1.100" fill="#d4d4d4"/><rect x="772.4" y="210.3" width="3.2" height="1.100" fill="#9cdcfe"/><rect x="775.6" y="210.3" width="0.8" height="1.100" fill="#d4d4d4"/><rect x="776.4" y="210.3" width="10.4" height="1.100" fill="#dcdcaa"/><rect x="786.8" y="210.3" width="1.6" height="1.100" fill="#d4d4d4"/><rect x="788.4" y="210.3" width="2.4" height="1.100" fill="#9cdcfe"/><rect x="790.8" y="210.3" width="0.8" height="1.100" fill="#d4d4d4"/><rect x="792.4" y="210.3" width="8.0" height="1.100" fill="#9cdcfe"/><rect x="800.4" y="210.3" width="0.8" height="1.100" fill="#d4d4d4"/><rect x="802.0" y="210.3" width="2.4" height="1.100" fill="#d4d4d4"/><rect x="805.2" y="210.3" width="4.0" height="1.100" fill="#6a9955"/><rect x="810.0" y="210.3" width="5.6" height="1.100" fill="#6a9955"/><rect x="816.4" y="210.3" width="1.6" height="1.100" fill="#6a9955"/><rect x="772.4" y="211.9" width="8.0" height="1.100" fill="#6a9955"/><rect x="781.2" y="211.9" width="5.6" height="1.100" fill="#6a9955"/><rect x="787.6" y="211.9" width="1.6" height="1.100" fill="#6a9955"/><rect x="789.2" y="211.9" width="0.8" height="1.100" fill="#6a9955"/><rect x="790.0" y="211.9" width="1.6" height="1.100" fill="#6a9955"/><rect x="775.6" y="213.5" width="1.6" height="1.100" fill="#c586c0"/><rect x="777.2" y="213.5" width="0.8" height="1.100" fill="#d4d4d4"/><rect x="778.0" y="213.5" width="2.4" height="1.100" fill="#9cdcfe"/><rect x="780.4" y="213.5" width="0.8" height="1.100" fill="#d4d4d4"/><rect x="782.0" y="213.5" width="4.0" height="1.100" fill="#c586c0"/><rect x="786.8" y="213.5" width="2.4" height="1.100" fill="#9cdcfe"/><rect x="775.6" y="215.1" width="5.6" height="1.100" fill="#9cdcfe"/><rect x="781.2" y="215.1" width="0.8" height="1.100" fill="#d4d4d4"/><rect x="782.0" y="215.1" width="2.4" height="1.100" fill="#dcdcaa"/><rect x="784.4" y="215.1" width="1.6" height="1.100" fill="#d4d4d4"/><rect x="786.0" y="215.1" width="7.2" height="1.100" fill="#9cdcfe"/><rect x="794.0" y="215.1" width="1.6" height="1.100" fill="#9cdcfe"/><rect x="796.4" y="215.1" width="0.8" height="1.100" fill="#d4d4d4"/><rect x="798.0" y="215.1" width="2.4" height="1.100" fill="#d4d4d4"/><rect x="801.2" y="215.1" width="8.0" height="1.100" fill="#9cdcfe"/><rect x="809.2" y="215.1" width="0.8" height="1.100" fill="#d4d4d4"/><rect x="810.0" y="215.1" width="6.4" height="1.100" fill="#9cdcfe"/><rect x="816.4" y="215.1" width="0.8" height="1.100" fill="#d4d4d4"/><rect x="818.0" y="215.1" width="5.6" height="1.100" fill="#6a9955"/><rect x="775.6" y="216.7" width="5.6" height="1.100" fill="#6a9955"/><rect x="782.0" y="216.7" width="4.0" height="1.100" fill="#6a9955"/><rect x="775.6" y="218.3" width="19.2" height="1.100" fill="#6a9955"/><rect x="795.6" y="218.3" width="1.6" height="1.100" fill="#6a9955"/><rect x="798.0" y="218.3" width="0.8" height="1.100" fill="#6a9955"/><rect x="799.6" y="218.3" width="19.2" height="1.100" fill="#6a9955"/><rect x="820.4" y="218.3" width="4.8" height="1.100" fill="#6a9955"/><rect x="826.0" y="218.3" width="0.8" height="1.100" fill="#6a9955"/><rect x="775.6" y="219.9" width="12.0" height="1.100" fill="#6a9955"/><rect x="775.6" y="223.1" width="8.0" height="1.100" fill="#9cdcfe"/><rect x="783.6" y="223.1" width="0.8" height="1.100" fill="#d4d4d4"/><rect x="784.4" y="223.1" width="4.0" height="1.100" fill="#dcdcaa"/><rect x="788.4" y="223.1" width="1.6" height="1.100" fill="#d4d4d4"/><rect x="790.0" y="223.1" width="4.8" height="1.100" fill="#9cdcfe"/><rect x="795.6" y="223.1" width="0.8" height="1.100" fill="#d4d4d4"/><rect x="797.2" y="223.1" width="3.2" height="1.100" fill="#9cdcfe"/><rect x="801.2" y="223.1" width="4.0" height="1.100" fill="#9cdcfe"/><rect x="806.0" y="223.1" width="4.0" height="1.100" fill="#9cdcfe"/><rect x="810.8" y="223.1" width="3.2" height="1.100" fill="#ce9178"/><rect x="814.8" y="223.1" width="0.8" height="1.100" fill="#d4d4d4"/><rect x="816.4" y="223.1" width="2.4" height="1.100" fill="#d4d4d4"/><rect x="819.6" y="223.1" width="2.4" height="1.100" fill="#9cdcfe"/><rect x="822.0" y="223.1" width="0.8" height="1.100" fill="#d4d4d4"/><rect x="822.8" y="223.1" width="4.8" height="1.100" fill="#9cdcfe"/><rect x="827.6" y="223.1" width="0.8" height="1.100" fill="#d4d4d4"/><rect x="828.4" y="223.1" width="1.6" height="1.100" fill="#9cdcfe"/><rect x="830.0" y="223.1" width="0.8" height="1.100" fill="#d4d4d4"/><rect x="775.6" y="224.7" width="0.8" height="1.100" fill="#d4d4d4"/><rect x="776.4" y="224.7" width="2.4" height="1.100" fill="#9cdcfe"/><rect x="778.8" y="224.7" width="0.8" height="1.100" fill="#d4d4d4"/><rect x="780.4" y="224.7" width="3.2" height="1.100" fill="#9cdcfe"/><rect x="783.6" y="224.7" width="0.8" height="1.100" fill="#d4d4d4"/><rect x="785.2" y="224.7" width="1.6" height="1.100" fill="#569cd6"/><rect x="787.6" y="224.7" width="0.8" height="1.100" fill="#d4d4d4"/><rect x="778.8" y="226.3" width="8.0" height="1.100" fill="#9cdcfe"/><rect x="786.8" y="226.3" width="0.8" height="1.100" fill="#d4d4d4"/><rect x="787.6" y="226.3" width="5.6" height="1.100" fill="#dcdcaa"/><rect x="793.2" y="226.3" width="2.4" height="1.100" fill="#d4d4d4"/><rect x="778.8" y="227.9" width="1.6" height="1.100" fill="#c586c0"/><rect x="780.4" y="227.9" width="0.8" height="1.100" fill="#d4d4d4"/><rect x="781.2" y="227.9" width="2.4" height="1.100" fill="#9cdcfe"/><rect x="783.6" y="227.9" width="0.8" height="1.100" fill="#d4d4d4"/><rect x="785.2" y="227.9" width="4.0" height="1.100" fill="#c586c0"/><rect x="790.0" y="227.9" width="2.4" height="1.100" fill="#9cdcfe"/><rect x="793.2" y="227.9" width="7.2" height="1.100" fill="#6a9955"/><rect x="801.2" y="227.9" width="4.0" height="1.100" fill="#6a9955"/><rect x="778.8" y="229.5" width="20.8" height="1.100" fill="#6a9955"/><rect x="778.8" y="231.1" width="1.6" height="1.100" fill="#c586c0"/><rect x="780.4" y="231.1" width="1.6" height="1.100" fill="#d4d4d4"/><rect x="782.0" y="231.1" width="2.4" height="1.100" fill="#9cdcfe"/><rect x="784.4" y="231.1" width="1.6" height="1.100" fill="#d4d4d4"/><rect x="786.8" y="231.1" width="4.8" height="1.100" fill="#6a9955"/><rect x="792.4" y="231.1" width="4.0" height="1.100" fill="#6a9955"/><rect x="797.2" y="231.1" width="12.0" height="1.100" fill="#6a9955"/><rect x="810.0" y="231.1" width="3.2" height="1.100" fill="#6a9955"/><rect x="782.0" y="232.7" width="15.2" height="1.100" fill="#6a9955"/><rect x="782.0" y="234.3" width="12.8" height="1.100" fill="#6a9955"/><rect x="782.0" y="235.9" width="2.4" height="1.100" fill="#9cdcfe"/><rect x="784.4" y="235.9" width="0.8" height="1.100" fill="#d4d4d4"/><rect x="785.2" y="235.9" width="3.2" height="1.100" fill="#dcdcaa"/><rect x="788.4" y="235.9" width="0.8" height="1.100" fill="#d4d4d4"/><rect x="789.2" y="235.9" width="3.2" height="1.100" fill="#9cdcfe"/><rect x="792.4" y="235.9" width="0.8" height="1.100" fill="#d4d4d4"/><rect x="782.0" y="237.5" width="16.8" height="1.100" fill="#6a9955"/><rect x="799.6" y="237.5" width="4.0" height="1.100" fill="#6a9955"/><rect x="804.4" y="237.5" width="9.6" height="1.100" fill="#6a9955"/><rect x="778.8" y="239.1" width="0.8" height="1.100" fill="#d4d4d4"/><rect x="780.4" y="239.1" width="3.2" height="1.100" fill="#c586c0"/><rect x="784.4" y="239.1" width="0.8" height="1.100" fill="#d4d4d4"/><rect x="782.0" y="240.7" width="5.6" height="1.100" fill="#9cdcfe"/><rect x="787.6" y="240.7" width="0.8" height="1.100" fill="#d4d4d4"/><rect x="788.4" y="240.7" width="2.4" height="1.100" fill="#dcdcaa"/><rect x="790.8" y="240.7" width="0.8" height="1.100" fill="#d4d4d4"/><rect x="791.6" y="240.7" width="2.4" height="1.100" fill="#9cdcfe"/><rect x="794.0" y="240.7" width="0.8" height="1.100" fill="#d4d4d4"/><rect x="778.8" y="242.3" width="0.8" height="1.100" fill="#d4d4d4"/><rect x="775.6" y="243.9" width="1.6" height="1.100" fill="#d4d4d4"/><rect x="772.4" y="245.5" width="1.6" height="1.100" fill="#d4d4d4"/><rect x="769.2" y="247.1" width="1.6" height="1.100" fill="#d4d4d4"/><rect x="769.2" y="250.3" width="7.2" height="1.100" fill="#6a9955"/><rect x="777.2" y="250.3" width="2.4" height="1.100" fill="#6a9955"/><rect x="780.4" y="250.3" width="4.8" height="1.100" fill="#6a9955"/><rect x="786.0" y="250.3" width="1.6" height="1.100" fill="#6a9955"/><rect x="788.4" y="250.3" width="6.4" height="1.100" fill="#6a9955"/><rect x="795.6" y="250.3" width="8.8" height="1.100" fill="#6a9955"/><rect x="769.2" y="251.9" width="5.6" height="1.100" fill="#6a9955"/><rect x="775.6" y="251.9" width="3.2" height="1.100" fill="#6a9955"/><rect x="779.6" y="251.9" width="1.6" height="1.100" fill="#6a9955"/><rect x="769.2" y="253.5" width="9.6" height="1.100" fill="#6a9955"/><rect x="779.6" y="253.5" width="5.6" height="1.100" fill="#6a9955"/><rect x="786.0" y="253.5" width="14.4" height="1.100" fill="#6a9955"/><rect x="801.2" y="253.5" width="8.0" height="1.100" fill="#6a9955"/><rect x="810.0" y="253.5" width="12.0" height="1.100" fill="#6a9955"/><rect x="769.2" y="255.1" width="2.4" height="1.100" fill="#9cdcfe"/><rect x="771.6" y="255.1" width="0.8" height="1.100" fill="#d4d4d4"/><rect x="772.4" y="255.1" width="2.4" height="1.100" fill="#dcdcaa"/><rect x="774.8" y="255.1" width="0.8" height="1.100" fill="#d4d4d4"/><rect x="775.6" y="255.1" width="8.0" height="1.100" fill="#9cdcfe"/><rect x="783.6" y="255.1" width="0.8" height="1.100" fill="#d4d4d4"/><rect x="784.4" y="255.1" width="3.2" height="1.100" fill="#dcdcaa"/><rect x="787.6" y="255.1" width="2.4" height="1.100" fill="#d4d4d4"/><rect x="790.8" y="255.1" width="5.6" height="1.100" fill="#6a9955"/><rect x="769.2" y="256.7" width="15.2" height="1.100" fill="#6a9955"/><rect x="769.2" y="258.3" width="2.4" height="1.100" fill="#9cdcfe"/><rect x="771.6" y="258.3" width="0.8" height="1.100" fill="#d4d4d4"/><rect x="772.4" y="258.3" width="3.2" height="1.100" fill="#dcdcaa"/><rect x="775.6" y="258.3" width="2.4" height="1.100" fill="#d4d4d4"/><rect x="778.0" y="258.3" width="5.6" height="1.100" fill="#9cdcfe"/><rect x="783.6" y="258.3" width="2.4" height="1.100" fill="#ce9178"/><rect x="786.0" y="258.3" width="2.4" height="1.100" fill="#9cdcfe"/><rect x="788.4" y="258.3" width="0.8" height="1.100" fill="#d4d4d4"/><rect x="790.0" y="258.3" width="2.4" height="1.100" fill="#9cdcfe"/><rect x="792.4" y="258.3" width="0.8" height="1.100" fill="#d4d4d4"/><rect x="794.0" y="258.3" width="1.6" height="1.100" fill="#569cd6"/><rect x="796.4" y="258.3" width="0.8" height="1.100" fill="#d4d4d4"/><rect x="769.2" y="261.5" width="7.2" height="1.100" fill="#6a9955"/><rect x="777.2" y="261.5" width="3.2" height="1.100" fill="#6a9955"/><rect x="781.2" y="261.5" width="4.8" height="1.100" fill="#6a9955"/><rect x="769.2" y="263.1" width="2.4" height="1.100" fill="#9cdcfe"/><rect x="771.6" y="263.1" width="0.8" height="1.100" fill="#d4d4d4"/><rect x="772.4" y="263.1" width="2.4" height="1.100" fill="#dcdcaa"/><rect x="774.8" y="263.1" width="2.4" height="1.100" fill="#d4d4d4"/><rect x="777.2" y="263.1" width="5.6" height="1.100" fill="#9cdcfe"/><rect x="782.8" y="263.1" width="1.6" height="1.100" fill="#d4d4d4"/><rect x="784.4" y="263.1" width="3.2" height="1.100" fill="#9cdcfe"/><rect x="787.6" y="263.1" width="2.4" height="1.100" fill="#ce9178"/><rect x="790.0" y="263.1" width="2.4" height="1.100" fill="#9cdcfe"/><rect x="792.4" y="263.1" width="0.8" height="1.100" fill="#d4d4d4"/><rect x="794.0" y="263.1" width="2.4" height="1.100" fill="#9cdcfe"/><rect x="796.4" y="263.1" width="0.8" height="1.100" fill="#d4d4d4"/><rect x="798.0" y="263.1" width="1.6" height="1.100" fill="#569cd6"/><rect x="800.4" y="263.1" width="0.8" height="1.100" fill="#d4d4d4"/><rect x="769.2" y="264.7" width="1.6" height="1.100" fill="#d4d4d4"/><rect x="769.2" y="267.9" width="5.6" height="1.100" fill="#6a9955"/><rect x="775.6" y="267.9" width="0.8" height="1.100" fill="#6a9955"/><rect x="777.2" y="267.9" width="4.0" height="1.100" fill="#6a9955"/><rect x="782.0" y="267.9" width="6.4" height="1.100" fill="#6a9955"/><rect x="789.2" y="267.9" width="5.6" height="1.100" fill="#6a9955"/><rect x="795.6" y="267.9" width="8.0" height="1.100" fill="#6a9955"/><rect x="804.4" y="267.9" width="1.6" height="1.100" fill="#6a9955"/><rect x="806.8" y="267.9" width="3.2" height="1.100" fill="#6a9955"/><rect x="810.8" y="267.9" width="1.6" height="1.100" fill="#6a9955"/><rect x="813.2" y="267.9" width="2.4" height="1.100" fill="#6a9955"/><rect x="769.2" y="269.5" width="2.4" height="1.100" fill="#9cdcfe"/><rect x="771.6" y="269.5" width="0.8" height="1.100" fill="#d4d4d4"/><rect x="772.4" y="269.5" width="2.4" height="1.100" fill="#dcdcaa"/><rect x="774.8" y="269.5" width="2.4" height="1.100" fill="#d4d4d4"/><rect x="777.2" y="269.5" width="8.0" height="1.100" fill="#9cdcfe"/><rect x="785.2" y="269.5" width="1.6" height="1.100" fill="#d4d4d4"/><rect x="786.8" y="269.5" width="3.2" height="1.100" fill="#9cdcfe"/><rect x="790.0" y="269.5" width="1.6" height="1.100" fill="#d4d4d4"/><rect x="791.6" y="269.5" width="1.6" height="1.100" fill="#9cdcfe"/><rect x="793.2" y="269.5" width="2.4" height="1.100" fill="#ce9178"/><rect x="795.6" y="269.5" width="2.4" height="1.100" fill="#9cdcfe"/><rect x="798.0" y="269.5" width="0.8" height="1.100" fill="#d4d4d4"/><rect x="799.6" y="269.5" width="2.4" height="1.100" fill="#9cdcfe"/><rect x="802.0" y="269.5" width="0.8" height="1.100" fill="#d4d4d4"/><rect x="803.6" y="269.5" width="1.6" height="1.100" fill="#569cd6"/><rect x="806.0" y="269.5" width="0.8" height="1.100" fill="#d4d4d4"/><rect x="769.2" y="271.1" width="1.6" height="1.100" fill="#d4d4d4"/><rect x="769.2" y="274.3" width="2.4" height="1.100" fill="#9cdcfe"/><rect x="771.6" y="274.3" width="0.8" height="1.100" fill="#d4d4d4"/><rect x="772.4" y="274.3" width="4.8" height="1.100" fill="#dcdcaa"/><rect x="777.2" y="274.3" width="0.8" height="1.100" fill="#d4d4d4"/><rect x="778.0" y="274.3" width="3.2" height="1.100" fill="#9cdcfe"/><rect x="781.2" y="274.3" width="0.8" height="1.100" fill="#d4d4d4"/><rect x="782.8" y="274.3" width="1.6" height="1.100" fill="#d4d4d4"/><rect x="785.2" y="274.3" width="1.6" height="1.100" fill="#569cd6"/><rect x="772.4" y="275.9" width="5.6" height="1.100" fill="#9cdcfe"/><rect x="778.0" y="275.9" width="0.8" height="1.100" fill="#d4d4d4"/><rect x="778.8" y="275.9" width="2.4" height="1.100" fill="#dcdcaa"/><rect x="781.2" y="275.9" width="1.6" height="1.100" fill="#d4d4d4"/><rect x="782.8" y="275.9" width="4.8" height="1.100" fill="#9cdcfe"/><rect x="788.4" y="275.9" width="1.6" height="1.100" fill="#9cdcfe"/><rect x="790.8" y="275.9" width="3.2" height="1.100" fill="#9cdcfe"/><rect x="794.8" y="275.9" width="0.8" height="1.100" fill="#d4d4d4"/><rect x="796.4" y="275.9" width="2.4" height="1.100" fill="#d4d4d4"/><rect x="799.6" y="275.9" width="3.2" height="1.100" fill="#9cdcfe"/><rect x="802.8" y="275.9" width="0.8" height="1.100" fill="#d4d4d4"/><rect x="769.2" y="277.5" width="0.8" height="1.100" fill="#d4d4d4"/></g></svg>
<div class="b" style="left:768.60px;top:239.10px;width:69.80px;height:1.50px;background:#27466b;"></div>
<div class="b" style="left:838.10px;top:87.60px;width:1.00px;height:492.00px;background:#303030;"></div>
<div class="b" style="left:838.10px;top:87.60px;width:10.70px;height:0.80px;background:#2a2a2a;"></div>
<div class="b" style="left:839.00px;top:264.80px;width:9.80px;height:119.20px;background:#404040;"></div>
<div class="b" style="left:839.00px;top:451.80px;width:9.80px;height:2.20px;background:#6e6e6e;"></div>
<span id="t1" class="t " style="left:41.30px;top:5.60px;font-size:13px;color:#9a9a9a;letter-spacing:-0.588px;">File</span>
<span id="t2" class="t " style="left:76.90px;top:5.60px;font-size:13px;color:#9a9a9a;letter-spacing:-0.327px;">Edit</span>
<span id="t3" class="t " style="left:115.00px;top:5.60px;font-size:13px;color:#9a9a9a;letter-spacing:-0.243px;">Selection</span>
<span id="t4" class="t " style="left:183.00px;top:5.60px;font-size:13px;color:#9a9a9a;letter-spacing:-0.313px;">View</span>
<span id="t5" class="t " style="left:226.90px;top:5.60px;font-size:13px;color:#9a9a9a;letter-spacing:-0.672px;">Go</span>
<span id="t6" class="t " style="left:259.90px;top:5.60px;font-size:13px;color:#9a9a9a;letter-spacing:-0.586px;">Run</span>
<span id="t7" class="t " style="left:369.00px;top:5.44px;font-size:12px;color:#8f8f8f;letter-spacing:-0.301px;">nodejs_sql.js - AjNesTNodeJS_SQL - Visual S...</span>
<span id="t8" class="t " style="left:60.30px;top:38.14px;font-size:10px;color:#cbcb41;letter-spacing:-0.917px;font-weight:bold;">JS</span>
<span id="t9" class="t " style="left:78.30px;top:38.30px;font-size:13px;color:#ffffff;letter-spacing:-0.550px;font-style:italic;">nodejs_sql.js</span>
<span id="t10" class="t " style="left:66.80px;top:66.33px;font-size:10px;color:#cbcb41;letter-spacing:-0.867px;font-weight:bold;">JS</span>
<span id="t11" class="t " style="left:84.40px;top:66.00px;font-size:13px;color:#a6a6a6;letter-spacing:-0.320px;">nodejs_sql.js</span>
<span id="t12" class="t " style="left:191.00px;top:66.00px;font-size:13px;color:#a6a6a6;letter-spacing:0.054px;">app.get('/getname_id/:name&amp;:id') callback</span>
<span id="t13" class="t " style="left:471.00px;top:66.00px;font-size:13px;color:#a6a6a6;letter-spacing:-0.044px;">pool.getConnection() callback</span>
<span id="t14" class="t bcl" style="left:677.10px;top:66.00px;font-size:13px;color:#a6a6a6;letter-spacing:-0.386px;width:171.7px;overflow:hidden;">connection.query('SELECT * FR</span>
<span id="t15" class="t m" style="left:72.36px;top:79.50px;font-size:13.4px;color:#858585;letter-spacing:-0.320px;clip-path:inset(8.2px 0 0 0);">42</span>
<span id="t16" class="t m" style="left:72.36px;top:98.63px;font-size:13.4px;color:#858585;letter-spacing:-0.320px;">43</span>
<span id="t17" class="t m" style="left:72.36px;top:117.77px;font-size:13.4px;color:#858585;letter-spacing:-0.320px;">44</span>
<span id="t18" class="t m" style="left:72.36px;top:136.90px;font-size:13.4px;color:#858585;letter-spacing:-0.320px;">45</span>
<span id="t19" class="t m" style="left:72.36px;top:156.04px;font-size:13.4px;color:#858585;letter-spacing:-0.320px;">46</span>
<span id="t20" class="t m" style="left:72.36px;top:175.17px;font-size:13.4px;color:#858585;letter-spacing:-0.320px;">47</span>
<span id="t21" class="t m" style="left:72.36px;top:213.44px;font-size:13.4px;color:#858585;letter-spacing:-0.320px;">48</span>
<span id="t22" class="t m" style="left:72.36px;top:232.58px;font-size:13.4px;color:#858585;letter-spacing:-0.320px;">49</span>
<span id="t23" class="t m" style="left:72.36px;top:270.85px;font-size:13.4px;color:#858585;letter-spacing:-0.320px;">50</span>
<span id="t24" class="t m" style="left:72.36px;top:309.12px;font-size:13.4px;color:#858585;letter-spacing:-0.320px;">51</span>
<span id="t25" class="t m" style="left:72.36px;top:328.25px;font-size:13.4px;color:#858585;letter-spacing:-0.320px;">52</span>
<span id="t26" class="t m" style="left:72.36px;top:366.52px;font-size:13.4px;color:#858585;letter-spacing:-0.320px;">53</span>
<span id="t27" class="t m" style="left:72.36px;top:385.66px;font-size:13.4px;color:#858585;letter-spacing:-0.320px;">54</span>
<span id="t28" class="t m" style="left:72.36px;top:404.79px;font-size:13.4px;color:#858585;letter-spacing:-0.320px;">55</span>
<span id="t29" class="t m" style="left:72.36px;top:423.93px;font-size:13.4px;color:#858585;letter-spacing:-0.320px;">56</span>
<span id="t30" class="t m" style="left:72.36px;top:443.06px;font-size:13.4px;color:#858585;letter-spacing:-0.320px;">57</span>
<span id="t31" class="t m" style="left:72.36px;top:462.20px;font-size:13.4px;color:#858585;letter-spacing:-0.320px;">58</span>
<span id="t32" class="t m" style="left:72.36px;top:481.33px;font-size:13.4px;color:#858585;letter-spacing:-0.320px;">59</span>
<span id="t33" class="t m" style="left:72.36px;top:500.47px;font-size:13.4px;color:#858585;letter-spacing:-0.320px;">60</span>
<span id="t34" class="t m" style="left:72.36px;top:519.60px;font-size:13.4px;color:#858585;letter-spacing:-0.320px;">61</span>
<span id="t35" class="t m" style="left:72.36px;top:538.74px;font-size:13.4px;color:#858585;letter-spacing:-0.320px;">62</span>
<span id="t36" class="t m" style="left:72.36px;top:557.87px;font-size:13.4px;color:#858585;letter-spacing:-0.320px;">63</span>
<span id="t37" class="t m" style="left:114.60px;top:98.63px;font-size:13.4px;color:#d4d4d4;letter-spacing:-0.320px;"><span style="color:#6a9955">//Copy</span></span>
<span id="t38" class="t th fx" style="left:169.00px;top:97.82px;font-size:13.5px;color:#6a9955;--w:49.4px;transform:scaleX(0.9880);width:51.5px;overflow:hidden;">บรรทัดที่</span>
<span id="t39" class="t m" style="left:226.00px;top:98.63px;font-size:13.4px;color:#d4d4d4;letter-spacing:-0.320px;"><span style="color:#6a9955">23 - 41</span></span>
<span id="t40" class="t th fx" style="left:288.00px;top:97.82px;font-size:13.5px;color:#6a9955;--w:55.5px;transform:scaleX(0.9407);width:60.6px;overflow:hidden;">มาปรับแก้</span>
<span id="t41" class="t m" style="left:351.70px;top:98.63px;font-size:13.4px;color:#d4d4d4;letter-spacing:-0.320px;"><span style="color:#6a9955">Code</span></span>
<span id="t42" class="t th fx" style="left:392.00px;top:97.82px;font-size:13.5px;color:#6a9955;--w:22.3px;transform:scaleX(0.8920);width:26.7px;overflow:hidden;">ใหม่</span>
<span id="t43" class="t m" style="left:114.60px;top:117.77px;font-size:13.4px;color:#d4d4d4;letter-spacing:-0.320px;"><span style="color:#6a9955">//</span></span>
<span id="t44" class="t th fx" style="left:129.90px;top:116.96px;font-size:13.5px;color:#6a9955;--w:76.0px;transform:scaleX(0.9500);width:81.6px;overflow:hidden;">สร้างหน้าย่อย</span>
<span id="t45" class="t th fx" style="left:216.00px;top:116.96px;font-size:13.5px;color:#6a9955;--w:84.0px;transform:scaleX(0.9545);width:89.6px;overflow:hidden;">ดึงข้อมูลเฉพาะ</span>
<span id="t46" class="t m" style="left:309.50px;top:117.77px;font-size:13.4px;color:#d4d4d4;letter-spacing:-0.320px;"><span style="color:#6a9955">id</span></span>
<span id="t47" class="t th fx" style="left:334.00px;top:116.96px;font-size:13.5px;color:#6a9955;--w:52.6px;transform:scaleX(0.9393);width:57.6px;overflow:hidden;">ที่ต้องการ</span>
<span id="t48" class="t th fx" style="left:396.60px;top:116.96px;font-size:13.5px;color:#6a9955;--w:15.4px;transform:scaleX(0.9059);width:18.7px;overflow:hidden;">คือ</span>
<span id="t49" class="t m" style="left:420.80px;top:117.77px;font-size:13.4px;color:#d4d4d4;letter-spacing:-0.320px;"><span style="color:#6a9955">123, 124, 125</span></span>
<span id="t50" class="t m" style="left:114.60px;top:136.90px;font-size:13.4px;color:#d4d4d4;letter-spacing:-0.320px;"><span style="color:#9cdcfe">app</span><span style="color:#d4d4d4">.</span><span style="color:#dcdcaa">get</span><span style="color:#ffd700">(</span><span style="color:#ce9178">'/:id'</span><span style="color:#d4d4d4">,</span><span style="color:#da70d6">(</span><span style="color:#9cdcfe">req</span><span style="color:#d4d4d4">, </span><span style="color:#9cdcfe">res</span><span style="color:#da70d6">)</span><span style="color:#d4d4d4"> </span><span style="color:#569cd6">=&gt;</span><span style="color:#d4d4d4"> </span><span style="color:#da70d6">{</span></span>
<span id="t51" class="t m" style="left:145.48px;top:175.17px;font-size:13.4px;color:#d4d4d4;letter-spacing:-0.320px;"><span style="color:#9cdcfe">pool</span><span style="color:#d4d4d4">.</span><span style="color:#dcdcaa">getConnection</span><span style="color:#179fff">(</span><span style="color:#ffd700">(</span><span style="color:#9cdcfe">err</span><span style="color:#d4d4d4">, </span><span style="color:#9cdcfe">connection</span><span style="color:#ffd700">)</span><span style="color:#d4d4d4"> </span><span style="color:#569cd6">=&gt;</span><span style="color:#ffd700">{</span><span style="color:#d4d4d4"> </span><span style="color:#6a9955">//err</span></span>
<span id="t52" class="t th fx" style="left:510.30px;top:174.36px;font-size:13.5px;color:#6a9955;--w:15.5px;transform:scaleX(0.9118);width:18.6px;overflow:hidden;">คือ</span>
<span id="t53" class="t m" style="left:534.00px;top:175.17px;font-size:13.4px;color:#d4d4d4;letter-spacing:-0.320px;"><span style="color:#6a9955">connect</span></span>
<span id="t54" class="t th fx" style="left:596.60px;top:174.36px;font-size:13.5px;color:#6a9955;--w:31.4px;transform:scaleX(0.9812);width:33.5px;overflow:hidden;">ไม่ได้</span>
<span id="t55" class="t m" style="left:635.20px;top:175.17px;font-size:13.4px;color:#d4d4d4;letter-spacing:-0.320px;"><span style="color:#6a9955">or</span></span>
<span id="t56" class="t m" style="left:145.48px;top:194.31px;font-size:13.4px;color:#d4d4d4;letter-spacing:-0.320px;"><span style="color:#6a9955">connection</span></span>
<span id="t57" class="t th fx" style="left:230.70px;top:193.50px;font-size:13.5px;color:#6a9955;--w:16.2px;transform:scaleX(0.9529);width:18.6px;overflow:hidden;">คือ</span>
<span id="t58" class="t m" style="left:255.10px;top:194.31px;font-size:13.4px;color:#d4d4d4;letter-spacing:-0.320px;"><span style="color:#6a9955">connect</span></span>
<span id="t59" class="t th fx" style="left:317.70px;top:193.50px;font-size:13.5px;color:#6a9955;--w:64.6px;transform:scaleX(0.9788);width:67.5px;overflow:hidden;">ได้บรรทัดที่</span>
<span id="t60" class="t m" style="left:390.60px;top:194.31px;font-size:13.4px;color:#d4d4d4;letter-spacing:-0.320px;"><span style="color:#6a9955">13-19</span></span>
<span id="t61" class="t m" style="left:176.36px;top:213.44px;font-size:13.4px;color:#d4d4d4;letter-spacing:-0.320px;"><span style="color:#c586c0">if</span><span style="color:#da70d6">(</span><span style="color:#9cdcfe">err</span><span style="color:#da70d6">)</span><span style="color:#d4d4d4"> </span><span style="color:#c586c0">throw</span><span style="color:#d4d4d4"> </span><span style="color:#9cdcfe">err</span></span>
<span id="t62" class="t m" style="left:176.36px;top:232.58px;font-size:13.4px;color:#d4d4d4;letter-spacing:-0.320px;"><span style="color:#9cdcfe">console</span><span style="color:#d4d4d4">.</span><span style="color:#dcdcaa">log</span><span style="color:#da70d6">(</span><span style="color:#ce9178">"connected id : ?"</span><span style="color:#d4d4d4">, </span><span style="color:#9cdcfe">connection</span><span style="color:#d4d4d4">.</span><span style="color:#9cdcfe">threadId</span><span style="color:#da70d6">)</span><span style="color:#d4d4d4"> </span><span style="color:#6a9955">//</span></span>
<span id="t63" class="t th fx" style="left:598.20px;top:231.77px;font-size:13.5px;color:#6a9955;--w:19.9px;transform:scaleX(1.2437);width:17.2px;overflow:hidden;">ให้</span>
<span id="t64" class="t m" style="left:625.20px;top:232.58px;font-size:13.4px;color:#d4d4d4;letter-spacing:-0.320px;"><span style="color:#6a9955">print</span></span>
<span id="t65" class="t th fx" style="left:672.30px;top:231.77px;font-size:13.5px;color:#6a9955;--w:38.1px;transform:scaleX(0.9293);width:42.6px;overflow:hidden;">บอกว่า</span>
<span id="t66" class="t m" style="left:176.36px;top:251.71px;font-size:13.4px;color:#d4d4d4;letter-spacing:-0.320px;"><span style="color:#6a9955">Connect</span></span>
<span id="t67" class="t th fx" style="left:238.50px;top:250.90px;font-size:13.5px;color:#6a9955;--w:40.2px;transform:scaleX(0.9805);width:42.5px;overflow:hidden;">ได้ไหม</span>
<span id="t68" class="t m" style="left:176.36px;top:270.85px;font-size:13.4px;color:#d4d4d4;letter-spacing:-0.320px;"><span style="color:#6a9955">//console.log(`connected id : ${connection.threadId}`)  //</span></span>
<span id="t69" class="t th fx" style="left:625.80px;top:270.04px;font-size:13.5px;color:#6a9955;--w:39.2px;transform:scaleX(0.9800);width:41.5px;overflow:hidden;">ต้องใช้</span>
<span id="t70" class="t m" style="left:671.50px;top:270.85px;font-size:13.4px;color:#d4d4d4;letter-spacing:-0.320px;"><span style="color:#6a9955">`</span></span>
<span id="t71" class="t th fx" style="left:176.40px;top:289.17px;font-size:13.5px;color:#6a9955;--w:119.8px;transform:scaleX(0.9901);width:122.5px;overflow:hidden;">อยู่ตรงที่เปลี่ยนภาษา</span>
<span id="t72" class="t m" style="left:176.36px;top:328.25px;font-size:13.4px;color:#d4d4d4;letter-spacing:-0.320px;"><span style="color:#9cdcfe">connection</span><span style="color:#d4d4d4">.</span><span style="color:#dcdcaa">query</span><span style="color:#da70d6">(</span><span style="color:#ce9178">'SELECT * FROM beers WHERE `id` = ?'</span><span style="color:#d4d4d4">, </span><span style="color:#9cdcfe">req</span><span style="color:#d4d4d4">.</span><span style="color:#9cdcfe">params</span><span style="color:#d4d4d4">.</span><span style="color:#9cdcfe">id</span><span style="color:#d4d4d4">,</span></span>
<span id="t73" class="t m" style="left:176.36px;top:347.39px;font-size:13.4px;color:#d4d4d4;letter-spacing:-0.320px;"><span style="color:#179fff">(</span><span style="color:#9cdcfe">err</span><span style="color:#d4d4d4">, </span><span style="color:#9cdcfe">rows</span><span style="color:#179fff">)</span><span style="color:#d4d4d4"> </span><span style="color:#569cd6">=&gt;</span><span style="color:#d4d4d4"> </span><span style="color:#179fff">{</span></span>
<span id="t74" class="t m" style="left:207.24px;top:366.52px;font-size:13.4px;color:#d4d4d4;letter-spacing:-0.320px;"><span style="color:#9cdcfe">connection</span><span style="color:#d4d4d4">.</span><span style="color:#dcdcaa">release</span><span style="color:#ffd700">()</span><span style="color:#d4d4d4">;</span></span>
<span id="t75" class="t m" style="left:207.24px;top:385.66px;font-size:13.4px;color:#d4d4d4;letter-spacing:-0.320px;"><span style="color:#c586c0">if</span><span style="color:#ffd700">(</span><span style="color:#d4d4d4">!</span><span style="color:#9cdcfe">err</span><span style="color:#ffd700">)</span><span style="color:#ffd700">{</span><span style="color:#d4d4d4"> </span><span style="color:#6a9955">//</span></span>
<span id="t76" class="t th fx" style="left:299.60px;top:384.85px;font-size:13.5px;color:#6a9955;--w:30.7px;transform:scaleX(0.9594);width:33.6px;overflow:hidden;">ถ้าไม่</span>
<span id="t77" class="t m" style="left:338.20px;top:385.66px;font-size:13.4px;color:#d4d4d4;letter-spacing:-0.320px;"><span style="color:#6a9955">error</span></span>
<span id="t78" class="t th fx" style="left:385.80px;top:384.85px;font-size:13.5px;color:#6a9955;--w:123.2px;transform:scaleX(0.9405);width:132.6px;overflow:hidden;">จะแสดงค่าของตัวแปร</span>
<span id="t79" class="t m" style="left:517.80px;top:385.66px;font-size:13.4px;color:#d4d4d4;letter-spacing:-0.320px;"><span style="color:#6a9955">rows</span></span>
<span id="t80" class="t m" style="left:238.12px;top:404.79px;font-size:13.4px;color:#d4d4d4;letter-spacing:-0.320px;"><span style="color:#6a9955">//console.log(rows)</span></span>
<span id="t81" class="t m" style="left:238.12px;top:423.93px;font-size:13.4px;color:#d4d4d4;letter-spacing:-0.320px;"><span style="color:#6a9955">//res.json(rows)</span></span>
<span id="t82" class="t m" style="left:238.12px;top:443.06px;font-size:13.4px;color:#d4d4d4;letter-spacing:-0.320px;"><span style="color:#9cdcfe">res</span><span style="color:#d4d4d4">.</span><span style="color:#dcdcaa">send</span><span style="color:#da70d6">(</span><span style="color:#9cdcfe">rows</span><span style="color:#da70d6">)</span></span>
<span id="t83" class="t m" style="left:207.24px;top:462.20px;font-size:13.4px;color:#d4d4d4;letter-spacing:-0.320px;"><span style="color:#ffd700">}</span><span style="color:#d4d4d4"> </span><span style="color:#c586c0">else</span><span style="color:#d4d4d4"> </span><span style="color:#ffd700">{</span></span>
<span id="t84" class="t m" style="left:238.12px;top:481.33px;font-size:13.4px;color:#d4d4d4;letter-spacing:-0.320px;"><span style="color:#9cdcfe">console</span><span style="color:#d4d4d4">.</span><span style="color:#dcdcaa">log</span><span style="color:#da70d6">(</span><span style="color:#9cdcfe">err</span><span style="color:#da70d6">)</span></span>
<span id="t85" class="t m" style="left:207.24px;top:500.47px;font-size:13.4px;color:#d4d4d4;letter-spacing:-0.320px;"><span style="color:#ffd700">}</span></span>
<span id="t86" class="t m" style="left:176.36px;top:519.60px;font-size:13.4px;color:#d4d4d4;letter-spacing:-0.320px;"><span style="color:#179fff">}</span><span style="color:#da70d6">)</span></span>
<span id="t87" class="t m" style="left:145.48px;top:538.74px;font-size:13.4px;color:#d4d4d4;letter-spacing:-0.320px;"><span style="color:#ffd700">}</span><span style="color:#179fff">)</span></span>
<span id="t88" class="t m" style="left:114.60px;top:557.87px;font-size:13.4px;color:#d4d4d4;letter-spacing:-0.320px;"><span style="color:#da70d6">}</span><span style="color:#ffd700">)</span></span>
<span id="t89" class="t " style="left:894.50px;top:16.64px;font-size:12px;color:#3b3733;letter-spacing:-0.075px;">localhost:5000/123</span>
<span id="t90" class="t " style="left:992.90px;top:51.35px;font-size:14px;color:#2e2a25;letter-spacing:-0.069px;">localhost:5000/123</span>
<span id="t91" class="t " style="left:858.30px;top:92.05px;font-size:14px;color:#000;letter-spacing:-0.273px;">[{"id":123,"name":"Chang","tagline":"8851993625136","description":"</span>
<span id="t92" class="t th2 fx" style="left:1262.50px;top:91.53px;font-size:15.5px;color:#000;--w:91.0px;transform:scaleX(0.7824);width:118.9px;overflow:hidden;">เบียร์ช้าง กระป๋อง</span>
<span id="t93" class="t " style="left:1359.00px;top:92.05px;font-size:14px;color:#000;letter-spacing:-0.108px;">490 ml","image":""}]</span>
<span id="t94" class="t " style="left:1382.90px;top:50.80px;font-size:7.5px;color:#ffffff;font-weight:bold;">G</span>
<span id="t95" class="t " style="left:1391.20px;top:54.35px;font-size:6.5px;color:#5f7f8c;font-family:'Liberation Sans','Noto Sans CJK SC',sans-serif;">文</span>
<div class="b" style="left:46px;top:87.500px;width:718.0px;height:5px;background:linear-gradient(#0a0a0a,rgba(10,10,10,0));opacity:.9"></div>
<script>
(function(){var a=document.querySelectorAll('.fx');for(var i=0;i<a.length;i++){var e=a[i],w=parseFloat(e.style.getPropertyValue('--w'));if(!w)continue;var t=e.style.transform,d=e.style.width;e.style.transform='none';e.style.width='auto';var n=e.getBoundingClientRect().width;if(n>0){var k=w/n;e.style.transform='scaleX('+k.toFixed(4)+')';e.style.width=((w+1.5)/k).toFixed(1)+'px';}else{e.style.transform=t;e.style.width=d;}}})();
</script>
</body>
</html>
